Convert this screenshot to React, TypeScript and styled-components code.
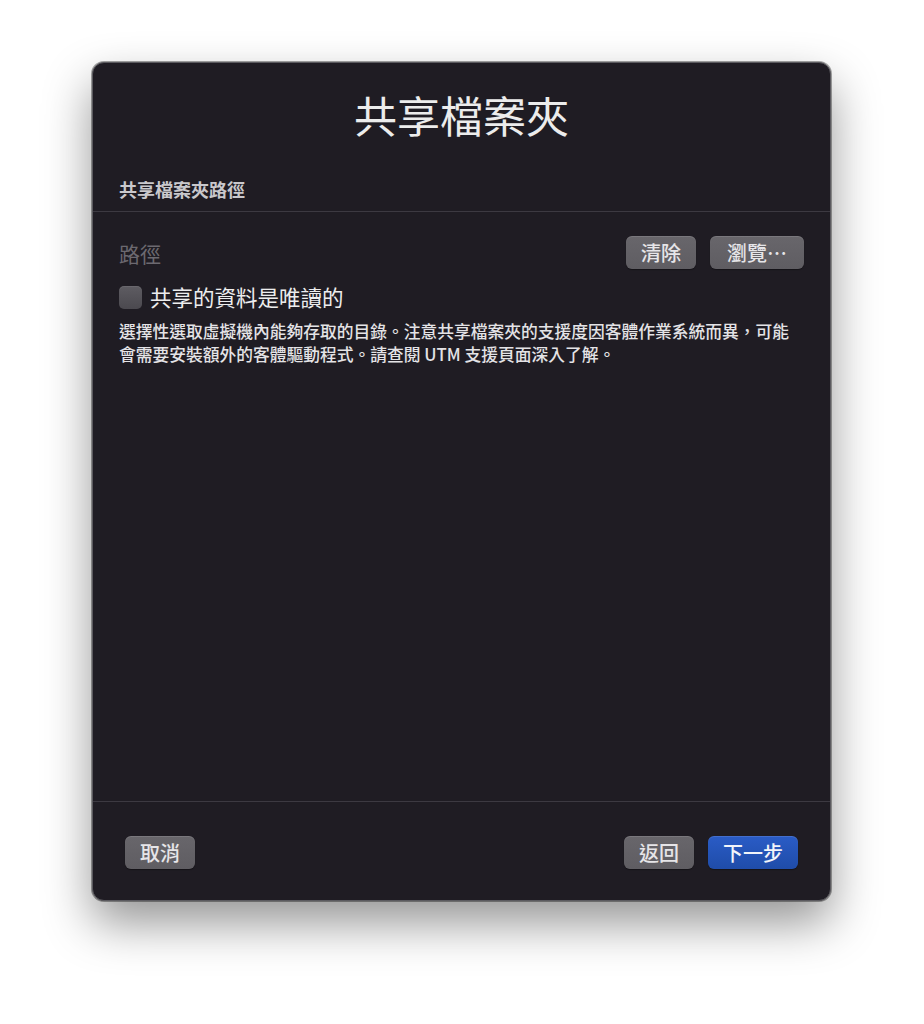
import React, { useState } from 'react'
import styled, { createGlobalStyle } from 'styled-components'

const GlobalStyle = createGlobalStyle`
    html, body {
        margin: 0;
        padding: 0;
        background: #ffffff;
    }
    body {
        font-family: "Noto Sans CJK TC", "Noto Sans", sans-serif;
    }
`

const App = () => {
    const [readOnly, setReadOnly] = useState(false)
    return (
        <Page>
            <GlobalStyle />
            <Window>
                <Title>共享檔案夾</Title>
                <SectionHeader>共享檔案夾路徑</SectionHeader>
                <Body>
                    <PathRow>
                        <PathLabel>路徑</PathLabel>
                        <ButtonGroup>
                            <Button type="button">清除</Button>
                            <Button type="button" $wide>瀏覽⋯</Button>
                        </ButtonGroup>
                    </PathRow>
                    <CheckRow onClick={() => setReadOnly(!readOnly)}>
                        <CheckBox $checked={readOnly} />
                        <CheckLabel>共享的資料是唯讀的</CheckLabel>
                    </CheckRow>
                    <Description>
                        選擇性選取虛擬機內能夠存取的目錄。注意共享檔案夾的支援度因客體作業系統而異，可能會需要安裝額外的客體驅動程式。請查閱 UTM 支援頁面深入了解。
                    </Description>
                </Body>
                <Footer>
                    <Button type="button">取消</Button>
                    <ButtonGroup>
                        <Button type="button">返回</Button>
                        <Button type="button" $primary>下一步</Button>
                    </ButtonGroup>
                </Footer>
            </Window>
        </Page>
    )
}

const Page = styled.div`
    padding: 62px 0 0 92px;
    min-height: 1024px;
    box-sizing: border-box;
`

const Window = styled.div`
    width: 739px;
    height: 839px;
    box-sizing: border-box;
    display: flex;
    flex-direction: column;
    background: #1f1c23;
    border: 1px solid #5b5a5f;
    border-radius: 12px;
    box-shadow: 0 0 0 1px rgba(0, 0, 0, 0.35), 0 22px 48px rgba(0, 0, 0, 0.42);
    overflow: hidden;
`

const Title = styled.h1`
    margin: 0;
    padding-top: 26px;
    font-size: 43px;
    line-height: 50px;
    font-weight: 400;
    color: #ececec;
    text-align: center;
`

const SectionHeader = styled.div`
    margin-top: 39px;
    padding: 0 26px 11px 26px;
    font-size: 18px;
    line-height: 22px;
    font-weight: 700;
    color: #c9c8cc;
    border-bottom: 1px solid #3c3941;
`

const Body = styled.div`
    flex: 1;
    display: flex;
    flex-direction: column;
    padding: 24px 26px 0 26px;
    border-bottom: 1px solid #3c3941;
`

const PathRow = styled.div`
    display: flex;
    align-items: center;
    justify-content: space-between;
`

const PathLabel = styled.span`
    font-size: 21px;
    line-height: 30px;
    color: #6c6970;
`

const ButtonGroup = styled.div`
    display: flex;
    align-items: center;
    gap: 14px;
`

const Button = styled.button<{ $primary?: boolean; $wide?: boolean }>`
    height: 33px;
    padding: 0 ${p => (p.$wide ? '17px' : '15px')};
    border: none;
    border-radius: 6px;
    font-family: "Noto Sans CJK TC", sans-serif;
    font-size: 20px;
    line-height: 33px;
    font-weight: 500;
    color: ${p => (p.$primary ? '#f2f4fa' : '#e6e5e8')};
    background: ${p => (p.$primary
        ? 'linear-gradient(#2a5cc6, #1f4ca9)'
        : 'linear-gradient(#68666b, #5f5d62)')};
    box-shadow: inset 0 1px 0 rgba(255, 255, 255, 0.12), 0 1px 1px rgba(0, 0, 0, 0.35);
    cursor: pointer;
`

const CheckRow = styled.label`
    display: flex;
    align-items: center;
    gap: 8px;
    margin-top: 16px;
    cursor: pointer;
`

const CheckBox = styled.span<{ $checked: boolean }>`
    width: 23px;
    height: 23px;
    box-sizing: border-box;
    border-radius: 5px;
    background: ${p => (p.$checked ? '#2a5cc6' : 'linear-gradient(#5e5c62, #4b494f)')};
    box-shadow: inset 0 1px 0 rgba(255, 255, 255, 0.08);
`

const CheckLabel = styled.span`
    font-size: 21.5px;
    line-height: 24px;
    color: #ededee;
`

const Description = styled.p`
    margin: 11px 0 0 0;
    font-size: 16.75px;
    line-height: 23px;
    font-weight: 500;
    color: #e4e3e6;
`

const Footer = styled.div`
    display: flex;
    align-items: center;
    justify-content: space-between;
    padding: 34px 32px 31px 32px;
`

export default App
